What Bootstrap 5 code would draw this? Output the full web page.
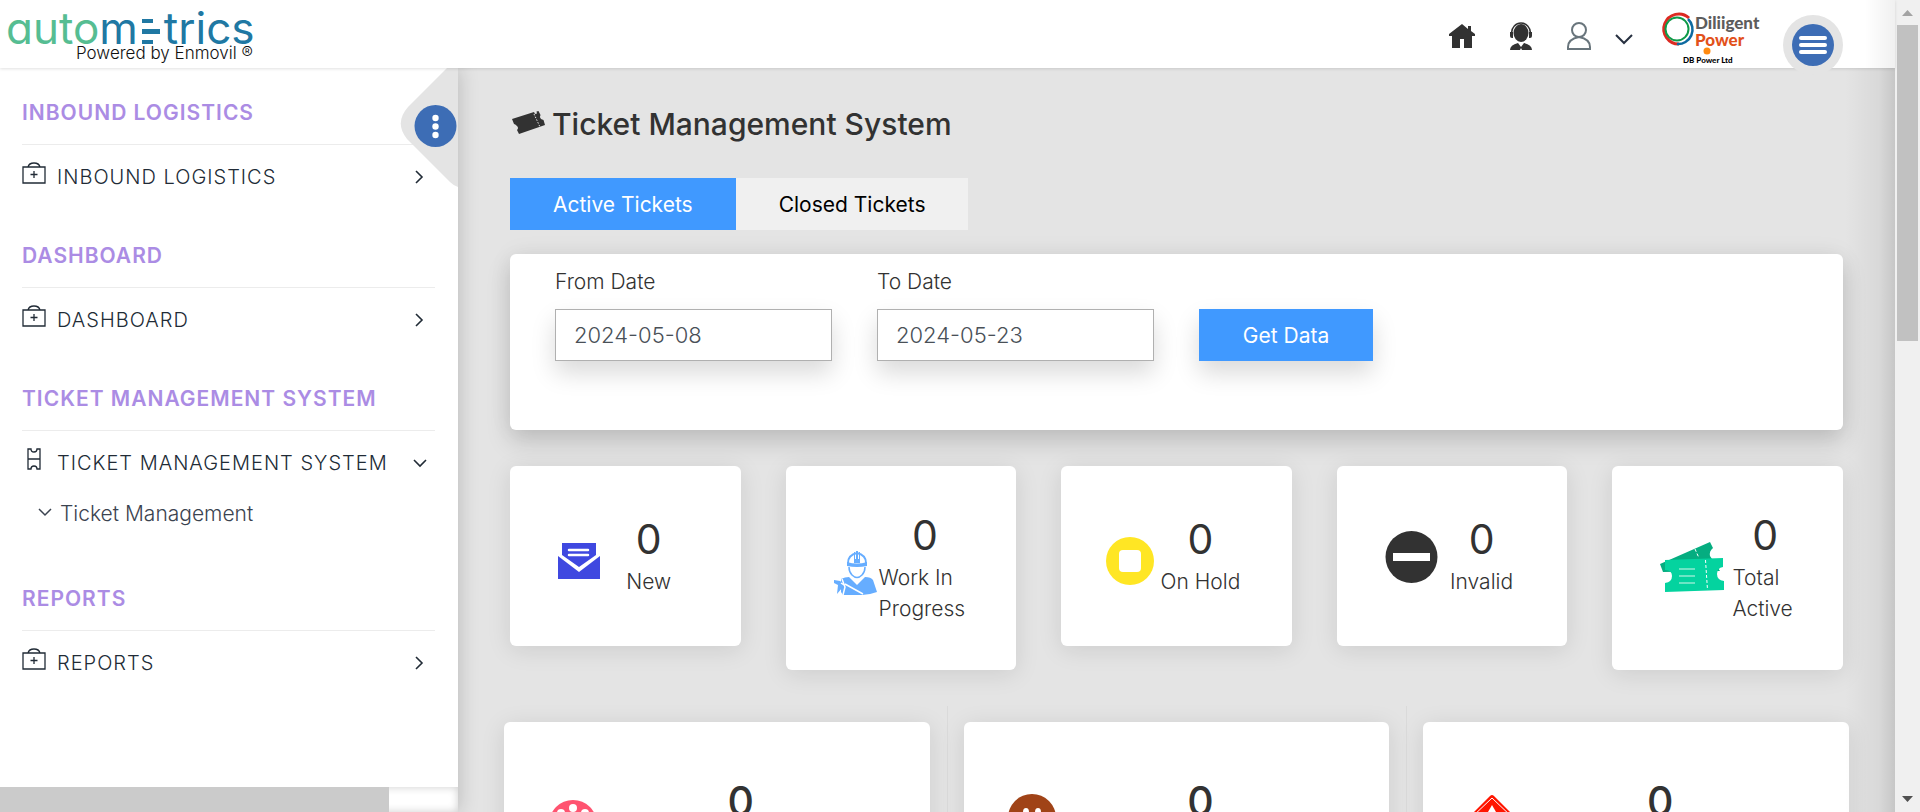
<!DOCTYPE html>
<html lang="en">
<head>
<meta charset="utf-8">
<meta name="viewport" content="width=device-width, initial-scale=1">
<title>Ticket Management System</title>
<link href="https://cdn.jsdelivr.net/npm/bootstrap@5.3.0/dist/css/bootstrap.min.css" rel="stylesheet">
<style>
  body { font-family: Inter, "Liberation Sans", sans-serif; font-size: 21px; line-height: 31px; font-weight: 300; color: #323232; background: #e4e4e4; }
  .app-shell { height: 100vh; }
  .app-bar { height: 68px; z-index: 5; box-shadow: 0 1px 3px rgba(0,0,0,.12); background: linear-gradient(to left, #f0f0f0, #fff 30px); }
  .icon-btn { border: 0; background: none; padding: 0; line-height: 0; color: #323232; }
  .brand-name { font-size: 44px; line-height: 56px; font-weight: 400; color: #56bd92; font-feature-settings: "cv11"; top: 0; left: 6px; }
  .brand-name .alt { color: #2078a3; }
  .brand-sub { font-size: 17px; line-height: 20px; top: 43px; left: 76px; color: #111; }
  .brand-box { width: 260px; }
  .client-name { font: 900 17px/17px Lato, sans-serif; color: #5d5d5d; top: 14px; left: 38px; }
  .client-name .power { color: #e2511b; }
  .client-sub { font: 900 8px/10px Lato, sans-serif; color: #000; top: 55px; left: 26px; }
  .client-box { width: 100px; }
  .menu-btn { width: 60px; height: 60px; background: #e4e4e4; margin: 15px 52px 0 26px; }
  .side-pane { width: 458px; background: #fff; box-shadow: 0 0 20px rgba(0,0,0,.2); z-index: 3; }
  .side-list { padding-top: 31px; }
  .side-group { margin-left: 22px; margin-right: 23px; }
  .side-title { font-size: 21px; line-height: 28px; font-weight: 600; letter-spacing: 1px; color: #ab8ce4; padding-bottom: 17px; border-bottom: 1px solid #ececec; margin: 0; }
  .side-link { color: #212b36; text-decoration: none; letter-spacing: 1px; font-size: 20px; height: 56px; padding: 8px 8px 0 0; margin-bottom: 41px; }
  .side-link .glyph { width: 24px; margin: 0 11px 8px 0; }
  .side-group.open .side-link { margin-bottom: 0; }
  .side-sub { color: #3b4350; text-decoration: none; height: 57px; padding: 11px 0 0 16px; margin-bottom: 41px; }
  .drawer-btn { right: 0; top: 0; }
  .side-scroll { height: 25px; background: #fff; box-shadow: inset 0 0 8px rgba(0,0,0,.2); }
  .side-thumb { width: 85%; background: #cbcbcb; }
  .work-area { padding: 37px 52px 0; }
  .edge-shade { width: 50px; right: 0; top: 0; background: linear-gradient(to left, rgba(0,0,0,.13), rgba(0,0,0,.05) 16px, transparent); }
  .page-title { font-size: 30px; line-height: 38px; font-weight: 500; gap: 7px; margin: 0 0 35px; }
  .tab-btn { border: 0; height: 52px; padding: 0 43px; background: #f0f0f0; color: #000; font-weight: 400; }
  .tab-btn.on, .go-btn { background: #4099ff; color: #fff; font-weight: 400; }
  .lift { box-shadow: 0 12px 24px rgba(0,0,0,.15); }
  .filter-card { background: #fff; border-radius: 6px; margin-top: 24px; padding: 12px 45px 0; height: 176px; gap: 45px; box-shadow: 0 12px 24px rgba(0,0,0,.15), 0 0 24px rgba(0,0,0,.06); }
  .date-box { width: 277px; height: 52px; border: 1px solid #b0b0b0; border-radius: 0; font-size: 22px; color: #495057; padding: 0 18px; display: block; margin-top: 12px; font-weight: 300; }
  .go-btn { border: 0; height: 52px; width: 174px; margin-top: 43px; }
  .stat-row { gap: 45px; margin-top: 36px; height: 256px; }
  .stat-card { background: #fff; border-radius: 6px; min-height: 180px; padding: 46px 45px; flex: 1 1 0; min-width: 0; box-shadow: 0 4px 24px rgba(0,0,0,.1); }
  .stat-num { font-size: 41px; line-height: 46px; font-weight: 400; margin-bottom: 4px; text-align: center; }
  .wide-row { margin: -16px -6px 0; gap: 34px; }
  .wide-card { flex: 1 1 0; background: #fff; border-radius: 6px; height: 180px; margin-top: 16px; padding: 56px 48px 0; box-shadow: 0 4px 24px rgba(0,0,0,.1); }
  .wide-card .stat-num { font-weight: 500; padding-left: 6px; }
  .wide-card svg { margin-top: 16px; overflow: visible; }
  .rule { width: 1px; background: #dadada; margin: 0 -18px 0 -17px; }
  .page-scroll { width: 25px; background: #f0f0f0; }
  .page-thumb { height: 316px; width: 21px; background: #c1c1c1; }
</style>
</head>
<body>
<div class="app-shell d-flex overflow-hidden">
  <div class="d-flex flex-column flex-grow-1">
    <header class="app-bar position-relative d-flex align-items-start flex-shrink-0">
      <a href="#" class="brand-box position-relative text-decoration-none me-auto h-100" aria-label="autometrics">
        <span class="brand-name position-absolute text-nowrap">auto<span class="alt">m<svg width="18" height="27" viewBox="0 0 18 27" fill="#2078a3" class="mx-1"><path d="M0 1h11v4H0zM0 11h18v5H0zM0 22h11v4H0z"/></svg>trics</span></span>
        <span class="brand-sub position-absolute text-nowrap">Powered by Enmovil ®</span>
      </a>
      <div class="d-flex align-items-center h-100 pt-1">
        <button class="icon-btn" aria-label="Home"><svg width="26" height="24" viewBox="0 0 26 24" fill="currentColor"><path d="M13 0 0 10v2h3v12h8v-9h4v9h8V12h3v-2l-4-3V2h-3v3z"/></svg></button>
        <button class="icon-btn ms-4 ps-2" aria-label="Support"><svg width="28" height="28" viewBox="-2 0 28 28"><g fill="#323232"><ellipse cx="12" cy="11" rx="7.500" ry="9"/><path d="M1 10h3v6H3q-2 0-2-2zM23 10h-3v6h1q2 0 2-2zM1 28q0-5 8-7l3 4 3-4q8 2 8 7H13l-1-2-1 2z"/></g><path d="M2.500 11a9.500 10 0 0 1 19 0" fill="none" stroke="#323232" stroke-width="1.500"/></svg></button>
        <button class="icon-btn ms-4 ps-2" aria-label="Account"><svg width="24" height="28" viewBox="0 0 24 28" fill="none" stroke="#69757c" stroke-width="2"><circle cx="12" cy="8" r="7"/><path d="M1 27v-2q0-8 11-10 11 2 11 10v2z"/></svg></button>
        <button class="icon-btn ms-4 pt-2" aria-label="Account menu"><svg width="18" height="12" viewBox="0 0 18 12" fill="none" stroke="#273040" stroke-width="2"><path d="m1 1 8 8 8-8"/></svg></button>
      </div>
      <div class="client-box position-relative h-100 ms-4">
        <svg class="position-absolute top-0 start-0" width="56" height="58" viewBox="0 0 56 58" fill="none"><path d="M32 18A15 15 0 1 0 22 44" stroke="#dc2a22" stroke-width="3"/><path d="M20 44A14.500 14.500 0 0 0 31 19" stroke="#0d6aa0" stroke-width="2.500"/><circle cx="20" cy="29" r="11.500" stroke="#0e9a48" stroke-width="2"/><circle cx="50" cy="51" r="3.500" fill="#ff8a10"/></svg>
        <div class="client-name position-absolute">Diliigent<br><span class="power">Power</span></div>
        <div class="client-sub position-absolute text-nowrap">DB Power Ltd</div>
      </div>
      <button class="menu-btn icon-btn rounded-circle flex-shrink-0" aria-label="Menu"><svg width="42" height="42" viewBox="0 0 42 42"><circle cx="21" cy="21" r="21" fill="#3d6db5"/><path d="M9 14h24M9 21h24M9 28h24" stroke="#fff" stroke-width="4" stroke-linecap="round"/></svg></button>
    </header>

    <div class="d-flex flex-grow-1 overflow-hidden">
      <nav class="side-pane position-relative d-flex flex-column flex-shrink-0">
        <div class="side-list flex-grow-1 overflow-hidden">
          <div class="side-group">
            <h2 class="side-title">INBOUND LOGISTICS</h2>
            <a href="#" class="side-link d-flex align-items-center"><svg class="glyph" width="24" height="22" viewBox="0 0 24 22" fill="none" stroke="#212b36"><path stroke-width="1.300" d="M1 5h22v16H1zM6 5q1-4 6-4t6 4"/><path stroke-width="1.300" d="M12 9v7M8.500 12.500h7"/></svg><span class="me-auto">INBOUND LOGISTICS</span><svg width="14" height="14" viewBox="0 0 14 14" fill="none" stroke="#212b36" stroke-width="1.600"><path d="m3 1 6 6-6 6"/></svg></a>
          </div>
          <div class="side-group">
            <h2 class="side-title">DASHBOARD</h2>
            <a href="#" class="side-link d-flex align-items-center"><svg class="glyph" width="24" height="22" viewBox="0 0 24 22" fill="none" stroke="#212b36"><path stroke-width="1.300" d="M1 5h22v16H1zM6 5q1-4 6-4t6 4"/><path stroke-width="1.300" d="M12 9v7M8.500 12.500h7"/></svg><span class="me-auto">DASHBOARD</span><svg width="14" height="14" viewBox="0 0 14 14" fill="none" stroke="#212b36" stroke-width="1.600"><path d="m3 1 6 6-6 6"/></svg></a>
          </div>
          <div class="side-group open">
            <h2 class="side-title">TICKET MANAGEMENT SYSTEM</h2>
            <a href="#" class="side-link d-flex align-items-center"><svg class="glyph" width="24" height="22" viewBox="0 0 24 22" fill="none" stroke="#212b36" stroke-width="1.300"><path d="M6 1h3q0 3 3 3t3-3h3v20h-3q0-3-3-3t-3 3H6zM6 11h12"/></svg><span class="me-auto text-nowrap">TICKET MANAGEMENT SYSTEM</span><svg width="14" height="14" viewBox="0 0 14 14" fill="none" stroke="#212b36" stroke-width="1.600"><path d="m1 4 6 6 6-6"/></svg></a>
            <a href="#" class="side-sub d-flex align-items-start"><svg class="mt-2 me-2" width="14" height="14" viewBox="0 0 14 14" fill="none" stroke="#3b4350" stroke-width="1.500"><path d="m1 3 6 6 6-6"/></svg><span>Ticket Management</span></a>
          </div>
          <div class="side-group">
            <h2 class="side-title">REPORTS</h2>
            <a href="#" class="side-link d-flex align-items-center"><svg class="glyph" width="24" height="22" viewBox="0 0 24 22" fill="none" stroke="#212b36"><path stroke-width="1.300" d="M1 5h22v16H1zM6 5q1-4 6-4t6 4"/><path stroke-width="1.300" d="M12 9v7M8.500 12.500h7"/></svg><span class="me-auto">REPORTS</span><svg width="14" height="14" viewBox="0 0 14 14" fill="none" stroke="#212b36" stroke-width="1.600"><path d="m3 1 6 6-6 6"/></svg></a>
          </div>
        </div>
        <button class="drawer-btn icon-btn position-absolute" aria-label="Toggle sidebar"><svg width="58" height="120" viewBox="0 0 58 120"><path d="M47 0 8 39Q-6 55 7 71l43 43q4 4 8 5V0z" fill="#e4e4e4"/><circle cx="35.500" cy="58" r="21" fill="#3d6db5"/><g fill="#fff"><circle cx="35.500" cy="50" r="3.200"/><circle cx="35.500" cy="58.500" r="3.200"/><circle cx="35.500" cy="67" r="3.200"/></g></svg></button>
        <div class="side-scroll d-flex flex-shrink-0"><div class="side-thumb"></div></div>
      </nav>

      <main class="work-area position-relative flex-grow-1">
        <div class="edge-shade position-absolute h-100"></div>
        <h1 class="page-title d-flex align-items-center"><svg width="35" height="28" viewBox="0 0 35 28"><path d="M2 9 24 2l1 2 2-.5-.500-2L28.500 1l2 4q-1.500 2 .5 4l2.500 1 1.500 5-26 9-2-4q2-2 0-4t-3-2z" fill="#323232"/><path d="m24 4 6 13" stroke="#e4e4e4" stroke-dasharray="1.500 1.500"/></svg>Ticket Management System</h1>
        <div class="d-flex">
          <button class="tab-btn on">Active Tickets</button><button class="tab-btn">Closed Tickets</button>
        </div>
        <form class="filter-card d-flex align-items-start">
          <div><label for="from" class="d-block">From Date</label><input id="from" type="text" class="date-box lift" value="2024-05-08"></div>
          <div><label for="to" class="d-block">To Date</label><input id="to" type="text" class="date-box lift" value="2024-05-23"></div>
          <button type="button" class="go-btn lift">Get Data</button>
        </form>
        <section class="stat-row d-flex align-items-start">
          <div class="stat-card d-flex align-items-center">
            <svg class="flex-shrink-0" width="47" height="46" viewBox="0 0 47 46"><path fill="#3f48e0" d="M7 10h34v12L24 34 7 22zM3 23l21 16 21-16v23H3z"/><path d="M14 17h19M14 22h19" stroke="#fff" stroke-width="2.500" stroke-linecap="round"/></svg>
            <div class="flex-grow-1 text-center"><div class="stat-num">0</div>New</div>
          </div>
          <div class="stat-card d-flex align-items-center">
            <svg class="flex-shrink-0" width="48" height="54" viewBox="0 0 48 54"><path d="M17 22q0-8 9-10 9 2 9 10" fill="none" stroke="#66adff" stroke-width="1.800"/><path d="M18 26q0 5 3 8 5 5 10 0 3-3 3-8" fill="none" stroke="#66adff" stroke-width="1.500"/><g fill="#66adff"><path d="M23 11h1v7h1v-8h2v8h1v-7h1v11h-6z"/><path d="M16 21q10 3 20 0v4q-10 2-20 0z"/><path d="M10 38q4-2 8-2l8 8 8-8q6 0 8 3l4 12q-8 3-15 3H12l-2-3z"/><path d="m3 39 6 1 4 3-2 4-5 6 1-9-4-2z"/></g><path d="m11 38 3 8-2 8M14 43l18 10M10 42l3 2" fill="none" stroke="#fff" stroke-width="1.500"/></svg>
            <div class="flex-grow-1"><div class="stat-num">0</div>Work In Progress</div>
          </div>
          <div class="stat-card d-flex align-items-center">
            <svg class="flex-shrink-0" width="48" height="58" viewBox="0 0 48 58"><circle cx="24" cy="34" r="24" fill="#ffe624"/><rect x="13" y="23" width="22" height="22" rx="4" fill="#fff"/></svg>
            <div class="flex-grow-1 text-center text-nowrap"><div class="stat-num">0</div>On Hold</div>
          </div>
          <div class="stat-card d-flex align-items-center">
            <svg class="flex-shrink-0" width="59" height="54" viewBox="0 0 59 54"><circle cx="29.500" cy="28" r="26" fill="#323232"/><path fill="#fff" d="M11 24h37v8H11z"/></svg>
            <div class="flex-grow-1 text-center"><div class="stat-num">0</div>Invalid</div>
          </div>
          <div class="stat-card d-flex align-items-center">
            <svg class="flex-shrink-0" width="75" height="52" viewBox="0 0 75 52"><path fill="#05ad80" d="m3 22 50-22 3 6q-4 3-3 8l10 15-57 1z"/><path fill="#04d39f" d="m8 18 58-2v9q-6 1-6 7t7 7v9L8 50v-9q7-1 7-7t-7-6z"/><path d="m38 7 4 9M48.500 18l2 30" stroke="#fff" stroke-dasharray="3 2"/><path d="M22 27h16M22 34h16M22 41h16" stroke="#8debd2" stroke-width="1.500"/></svg>
            <div class="flex-grow-1"><div class="stat-num">0</div>Total Active</div>
          </div>
        </section>
        <section class="wide-row d-flex">
          <div class="wide-card d-flex align-items-start"><svg width="42" height="42" viewBox="0 0 42 42"><circle cx="21" cy="31" r="24" fill="#ff5370" transform="translate(0 -1)"/><g fill="#fff"><circle cx="21" cy="14" r="4"/><circle cx="9" cy="19" r="4"/><circle cx="33" cy="19" r="4"/></g></svg><div class="stat-num flex-grow-1">0</div></div>
          <div class="rule"></div>
          <div class="wide-card d-flex align-items-start"><svg width="42" height="42" viewBox="0 0 42 42"><circle cx="20" cy="24" r="24" fill="#a04317"/><g fill="#fff"><ellipse cx="14" cy="18" rx="3" ry="4"/><ellipse cx="26" cy="18" rx="3" ry="4"/></g></svg><div class="stat-num flex-grow-1">0</div></div>
          <div class="rule"></div>
          <div class="wide-card d-flex align-items-start"><svg width="42" height="42" viewBox="0 0 42 42"><path d="M19 2q2-2 4 0l20 20-22 22L-1 22z" fill="#ff1500"/><path d="M0 24 21 4l21 20" fill="none" stroke="#fff"/><path d="m21 11 8 14H13z" fill="#fff"/></svg><div class="stat-num flex-grow-1">0</div></div>
        </section>
      </main>
    </div>
  </div>
  <div class="page-scroll d-flex flex-column align-items-center flex-shrink-0">
    <svg width="25" height="25"><path d="m7 16 5.500-6 5.500 6z" fill="#a3a3a3"/></svg>
    <div class="page-thumb"></div>
    <svg class="mt-auto" width="25" height="25"><path d="m7 9 5.500 6L18 9z" fill="#505050"/></svg>
  </div>
</div>
<script src="https://cdn.jsdelivr.net/npm/bootstrap@5.3.0/dist/js/bootstrap.bundle.min.js"></script>
</body>
</html>
